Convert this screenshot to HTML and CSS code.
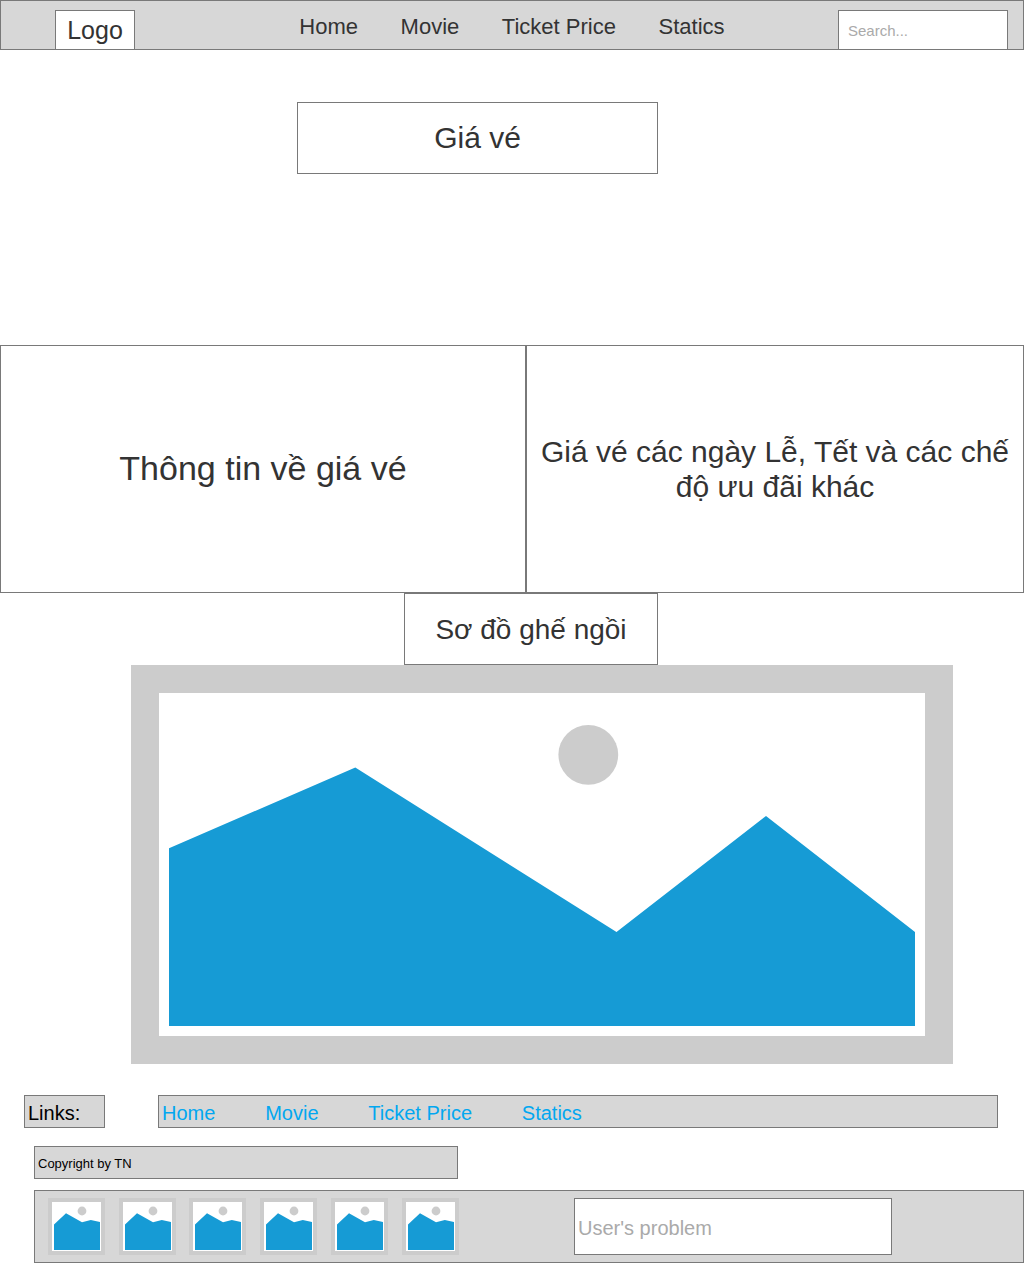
FILE: index.html
```html
<!DOCTYPE html>
<html lang="vi">
<head>
<meta charset="utf-8">
<title>Giá vé</title>
<link rel="stylesheet" href="styles.css">
</head>
<body>
<svg class="defs" aria-hidden="true">
  <symbol id="thumb" viewBox="0 0 57 57">
    <rect width="57" height="57" fill="#ccc"/>
    <rect x="4" y="4" width="49" height="49" fill="#fff"/>
    <circle cx="34" cy="13" r="4.4" fill="#ccc"/>
    <path d="M6 26.5 18 15.2 34 24.3 42.8 22 52 24V52H6z" fill="#169bd5"/>
  </symbol>
</svg>
<header class="header">
  <div class="logo">Logo</div>
  <nav class="nav">
    <a>Home</a><a>Movie</a><a>Ticket Price</a><a>Statics</a>
  </nav>
  <input class="search" type="text" placeholder="Search...">
</header>
<main>
  <h1 class="box title">Giá vé</h1>
  <section class="panels">
    <div class="box prices">Thông tin về giá vé</div>
    <div class="box offers">Giá vé các ngày Lễ, Tết và các chế độ ưu đãi khác</div>
  </section>
  <h2 class="box seats-title">Sơ đồ ghế ngồi</h2>
  <svg class="seats-map" viewBox="0 0 822 399">
    <rect width="822" height="399" fill="#ccc"/>
    <rect x="28" y="28" width="766" height="343" fill="#fff"/>
    <circle cx="457.3" cy="89.8" r="29.9" fill="#ccc"/>
    <path d="M38 183.3 224.3 102.6 485.5 267 635 151 784 267V361H38z" fill="#169bd5"/>
  </svg>
</main>
<footer class="footer">
  <div class="links-row">
    <div class="bar links-label">Links:</div>
    <nav class="bar links"><a>Home</a><a>Movie</a><a>Ticket Price</a><a>Statics</a></nav>
  </div>
  <div class="bar copyright">Copyright by TN</div>
  <div class="bar contact">
    <div class="thumbs">
      <svg><use href="#thumb"/></svg>
      <svg><use href="#thumb"/></svg>
      <svg><use href="#thumb"/></svg>
      <svg><use href="#thumb"/></svg>
      <svg><use href="#thumb"/></svg>
      <svg><use href="#thumb"/></svg>
    </div>
    <input class="problem" type="text" placeholder="User's problem">
  </div>
</footer>
</body>
</html>
```
FILE: styles.css
```css
* {
  box-sizing: border-box;
}

body {
  margin: 0;
  background: #fff;
  color: #333;
  font-family: "Liberation Sans", Arial, sans-serif;
}

.defs {
  display: none;
}

.header {
  display: flex;
  align-items: flex-start;
  height: 50px;
  padding-left: 54px;
  background: #d7d7d7;
  border: 1px solid #797979;
}

.logo {
  width: 80px;
  height: 40px;
  margin-top: 9px;
  padding-top: 5px;
  background: #fff;
  border: 1px solid #797979;
  font-size: 25px;
  line-height: 28px;
  text-align: center;
}

.nav {
  display: flex;
  gap: 42.6px;
  width: 538.7px;
  margin-left: 164.3px;
  padding-top: 13px;
  font-size: 22px;
  line-height: 25px;
}

input {
  margin: 0;
  background: #fff;
  border: 1px solid #797979;
  border-radius: 0;
  font-family: inherit;
}

input::placeholder {
  color: #aaa;
  opacity: 1;
}

.search {
  width: 170px;
  height: 40px;
  margin-top: 9px;
  padding: 0 9px;
  font-size: 15px;
}

.box {
  display: flex;
  align-items: center;
  justify-content: center;
  margin: 0;
  border: 1px solid #797979;
  font-weight: 400;
  text-align: center;
}

.title {
  width: 361px;
  height: 72px;
  margin: 52px 0 0 297px;
  font-size: 30px;
}

.panels {
  display: grid;
  grid-template-columns: 526px 498px;
  height: 248px;
  margin-top: 171px;
}

.prices {
  padding-bottom: 2px;
  font-size: 34px;
}

.offers {
  font-size: 30px;
  line-height: 35px;
}

.seats-title {
  width: 254px;
  height: 72px;
  margin-left: 404px;
  padding-top: 1px;
  font-size: 28px;
}

.seats-map {
  display: block;
  width: 822px;
  height: 399px;
  margin-left: 131px;
}

.footer {
  padding-top: 31px;
  color: #000;
}

.bar {
  display: flex;
  align-items: center;
  height: 33px;
  padding: 2px 3px 0;
  background: #d7d7d7;
  border: 1px solid #797979;
}

.links-row {
  display: flex;
  gap: 53px;
  margin-left: 24px;
  font-size: 20px;
}

.links-row .bar {
  padding-top: 4px;
}

.links-label {
  width: 81px;
}

.links {
  gap: 49.8px;
  width: 840px;
  color: #02a7f0;
}

.copyright {
  width: 424px;
  margin: 18px 0 11px 34px;
  font-size: 13px;
}

.contact {
  align-items: flex-start;
  justify-content: space-between;
  height: 73px;
  margin-left: 34px;
  padding: 7px 131px 0 12.8px;
}

.thumbs {
  display: flex;
  gap: 13.8px;
}

.thumbs svg {
  display: block;
  width: 57px;
  height: 57px;
}

.problem {
  width: 318px;
  height: 57px;
  padding: 3px 3px 0;
  font-size: 20px;
}
```
